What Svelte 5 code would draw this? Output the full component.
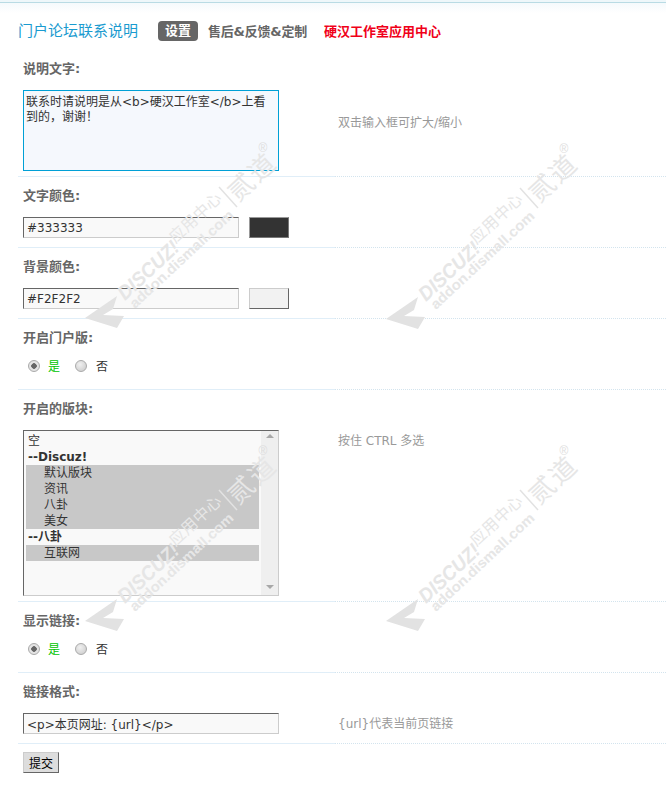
<script lang="ts">
    const marks = [
        { x: 85, y: 318 },
        { x: 386, y: 319 },
        { x: 85, y: 621 },
        { x: 386, y: 621 },
    ];

    const forums = [
        { name: '空' },
        { name: '--Discuz!', group: true },
        { name: '默认版块', on: true },
        { name: '资讯', on: true },
        { name: '八卦', on: true },
        { name: '美女', on: true },
        { name: '--八卦', group: true },
        { name: '互联网', on: true },
    ];

    const note = '联系时请说明是从<b>硬汉工作室</b>上看到的，谢谢！';
    const linkFormat = '<p>本页网址: {url}</p>';
</script>

<div class="page">
    <div class="topline"></div>

    <div class="head">
        <h3>门户论坛联系说明</h3>
        <span class="tab current">设置</span>
        <span class="tab">售后&amp;反馈&amp;定制</span>
        <span class="tab red">硬汉工作室应用中心</span>
    </div>

    <div class="label">说明文字:</div>
    <div class="row tall">
        <div class="field">
            <textarea readonly value={note}></textarea>
        </div>
        <div class="tips first">双击输入框可扩大/缩小</div>
    </div>

    <div class="label">文字颜色:</div>
    <div class="row">
        <div class="field">
            <input class="color" readonly value="#333333" />
            <span class="swatch dark"></span>
        </div>
        <div class="tips"></div>
    </div>

    <div class="label">背景颜色:</div>
    <div class="row">
        <div class="field">
            <input class="color" readonly value="#F2F2F2" />
            <span class="swatch light"></span>
        </div>
        <div class="tips"></div>
    </div>

    <div class="label">开启门户版:</div>
    <div class="row">
        <div class="field radios">
            <span class="radio checked"></span><span class="yes">是</span>
            <span class="radio"></span><span class="no">否</span>
        </div>
        <div class="tips"></div>
    </div>

    <div class="label">开启的版块:</div>
    <div class="row tall">
        <div class="field">
            <div class="select">
                <div class="options">
                    {#each forums as forum}
                        <div class="option" class:group={forum.group} class:on={forum.on}>{forum.name}</div>
                    {/each}
                </div>
                <div class="scrollbar">
                    <span class="arrow up"></span>
                    <span class="arrow down"></span>
                </div>
            </div>
        </div>
        <div class="tips second">按住 CTRL 多选</div>
    </div>

    <div class="label">显示链接:</div>
    <div class="row">
        <div class="field radios">
            <span class="radio checked"></span><span class="yes">是</span>
            <span class="radio"></span><span class="no">否</span>
        </div>
        <div class="tips"></div>
    </div>

    <div class="label">链接格式:</div>
    <div class="row">
        <div class="field">
            <input class="wide" readonly value={linkFormat} />
        </div>
        <div class="tips third">&#123;url&#125;代表当前页链接</div>
    </div>

    <button class="submit">提交</button>

    {#each marks as mark}
        <svg class="mark" width="200" height="200" viewBox="0 -190 200 200" style="left: {mark.x}px; top: {mark.y - 190}px">
            <polygon points="0,0 32,-22 28,-9 18,-3 39,-2 32,10" />
            <text class="discuz" transform="translate(40,-17) rotate(-43)" textLength="76" lengthAdjust="spacingAndGlyphs">DISCUZ!</text>
            <text class="center" transform="translate(90.3,-74.2) rotate(-43)" textLength="65">应用中心</text>
            <text class="addon" transform="translate(50,-9) rotate(-43)" textLength="136" lengthAdjust="spacingAndGlyphs">addon.dismall.com</text>
            <line x1="134" y1="-131" x2="152" y2="-111" />
            <text class="name" transform="translate(153.1,-115.3) rotate(-43)" textLength="54">贰道</text>
            <text class="reg" transform="translate(178,-170)" text-anchor="middle" dominant-baseline="central">®</text>
        </svg>
    {/each}
</div>

<style>
:global(body) {
    margin: 0;
    background: #fff;
}

.page {
    position: relative;
    height: 787px;
    overflow: hidden;
    font-family: "DejaVu Sans", "Noto Sans CJK SC", sans-serif;
    font-size: 12px;
    color: #333;
}

.topline {
    height: 2px;
    background: #eef7fa;
    border-bottom: 1px solid #b9dbe4;
}

.head {
    display: flex;
    align-items: center;
    height: 47px;
    padding: 8px 0 0 18px;
    box-sizing: border-box;
    background: linear-gradient(#f5fafc, #fff 10px);
}

.head h3 {
    margin: 0 20px 0 0;
    font-size: 15px;
    line-height: 20px;
    font-weight: normal;
    color: #1a9bd0;
}

.tab {
    margin-right: 10px;
    font-weight: bold;
    font-size: 13px;
    color: #666;
    white-space: nowrap;
}

.tab:nth-of-type(2) {
    letter-spacing: -0.2px;
}

.tab.current {
    width: 40px;
    height: 20px;
    line-height: 20px;
    text-align: center;
    border-radius: 4px;
    background: #666;
    color: #fff;
}

.tab.red {
    margin-left: 7px;
    color: #f00019;
}

.label {
    height: 40px;
    line-height: 37px;
    padding-left: 5px;
    box-sizing: border-box;
    margin-left: 18px;
    font-size: 13px;
    font-weight: bold;
    color: #666;
}

.row {
    display: flex;
    height: 31px;
}

.row.tall {
    height: auto;
}

.field {
    display: flex;
    align-items: flex-start;
    width: 317px;
    margin-left: 18px;
    padding-left: 5px;
    box-sizing: border-box;
    border-bottom: 1px solid #e0eef8;
}

.row.tall .field {
    padding-bottom: 5px;
}

.tips {
    flex: 1;
    padding-left: 3px;
    border-bottom: 1px dotted #d3e4ee;
    color: #999;
    line-height: 15px;
}

.tips.first {
    padding-top: 26px;
}

.tips.second {
    padding-top: 4px;
}

.tips.third {
    padding-top: 4px;
}

textarea,
input {
    display: block;
    box-sizing: border-box;
    margin: 0;
    font: inherit;
    color: #333;
    outline: none;
}

textarea {
    width: 256px;
    height: 81px;
    padding: 4px 2px;
    line-height: 15px;
    resize: none;
    overflow: hidden;
    border: 1px solid #00a0d6;
    background: #f5f8fd;
}

input {
    height: 21px;
    padding: 1px 3px;
    background: #f9f9f9;
    border: 1px solid;
    border-color: #666 #ccc #ccc #666;
}

.color {
    width: 216px;
}

.wide {
    width: 256px;
}

.swatch {
    width: 40px;
    height: 21px;
    margin-left: 10px;
    box-sizing: border-box;
    border: 1px solid;
}

.swatch.dark {
    background: #333;
    border-color: #999 #777 #777 #999;
}

.swatch.light {
    background: #f2f2f2;
    border-color: #ccc #666 #666 #ccc;
}

.radios {
    padding-left: 10px;
    line-height: 15px;
}

.radio {
    width: 12px;
    height: 12px;
    margin: 1px 8px 0 0;
    box-sizing: border-box;
    border: 1px solid #aaa;
    border-radius: 50%;
    background: radial-gradient(circle at 40% 35%, #f0f0f0, #c8c8c8);
}

.radio.checked {
    background: radial-gradient(circle, #666 0 2.5px, #e4e4e4 3px);
}

.yes {
    margin: 1px 15px 0 0;
    color: #00c400;
}

.no {
    margin: 1px 0 0 1px;
    color: #333;
}

.select {
    display: flex;
    width: 256px;
    height: 166px;
    box-sizing: border-box;
    border: 1px solid;
    border-color: #666 #ccc #ccc #666;
    background: #f9f9f9;
}

.options {
    flex: 1;
    padding: 2px 0 0 2px;
    margin-right: 2px;
}

.option {
    height: 16px;
    line-height: 17px;
    padding-left: 2px;
    color: #333;
    white-space: nowrap;
}

.option.group {
    font-weight: bold;
}

.option.on {
    padding-left: 18px;
    background: #c8c8c8;
}

.scrollbar {
    position: relative;
    width: 17px;
    background: #efefef;
}

.arrow {
    position: absolute;
    left: 5px;
    width: 0;
    height: 0;
    border: 4px solid transparent;
}

.arrow.up {
    top: 3px;
    border-top: 0;
    border-bottom: 4px solid #a8a8a8;
}

.arrow.down {
    bottom: 6px;
    border-bottom: 0;
    border-top: 4px solid #a8a8a8;
}

.submit {
    display: block;
    width: 36px;
    height: 21px;
    margin: 8px 0 0 23px;
    padding: 0;
    font: inherit;
    color: #000;
    background: #ddd;
    border: 1px solid;
    border-color: #ccc #666 #666 #ccc;
}

.mark {
    position: absolute;
    pointer-events: none;
    overflow: visible;
    fill: #e6e6e6;
    stroke: none;
    font-family: "Liberation Sans", "Noto Sans CJK SC", sans-serif;
}

.mark polygon {
    fill: #e2e2e2;
}

.mark line {
    stroke: #e2e2e2;
    stroke-width: 1.5;
}

.discuz {
    font-size: 20px;
    font-weight: bold;
    font-style: italic;
}

.center {
    font-size: 16px;
}

.addon {
    font-size: 14px;
    font-weight: bold;
}

.name {
    font-size: 26px;
}

.reg {
    font-size: 12px;
    fill: #dedede;
}
</style>
